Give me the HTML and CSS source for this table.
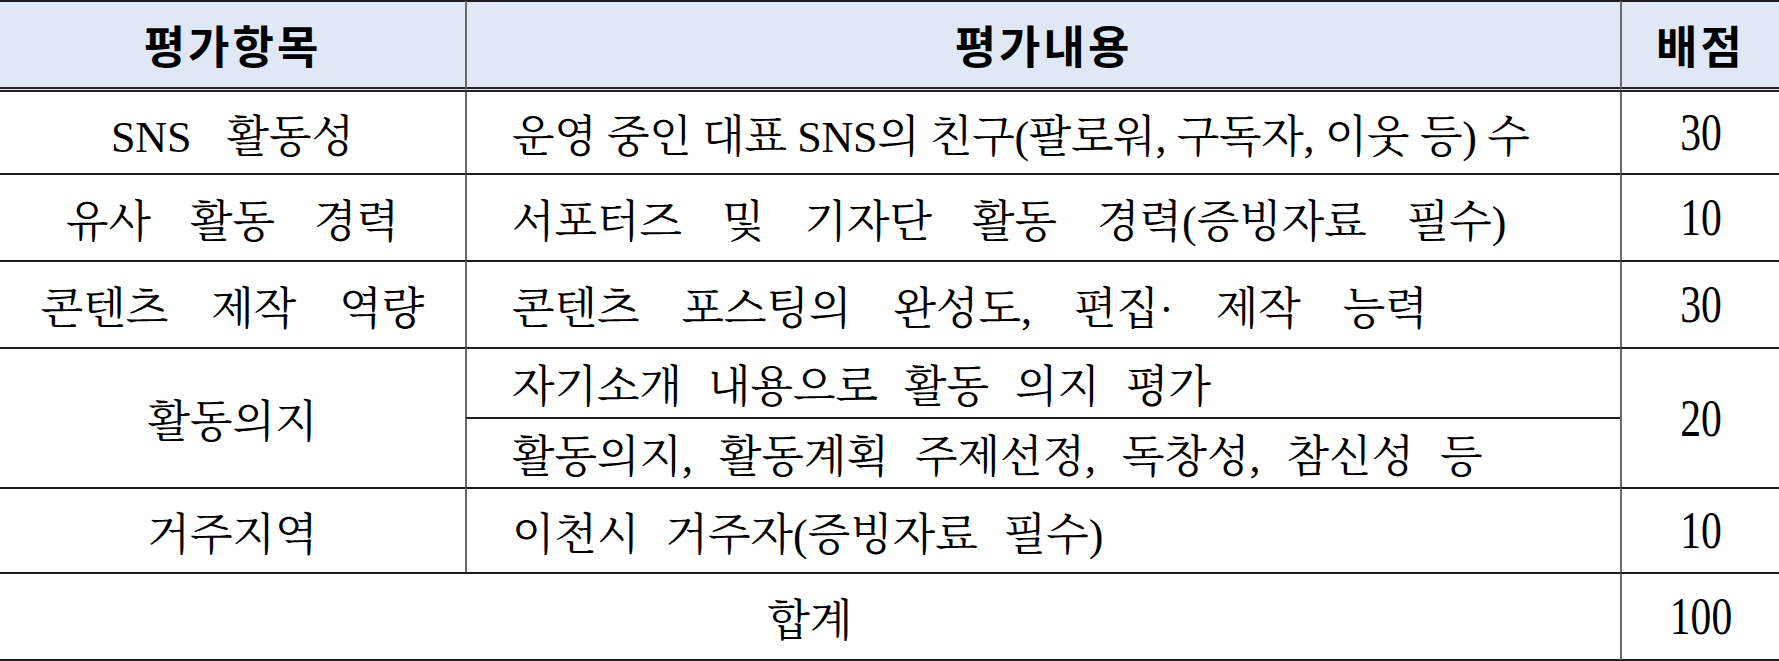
FILE: index.html
```html
<!DOCTYPE html>
<html lang="ko">
<head>
<meta charset="utf-8">
<title>평가항목</title>
<link rel="stylesheet" href="styles.css">
</head>
<body>
<div class="table">
  <div class="cell head">평가항목</div>
  <div class="cell head sep">평가내용</div>
  <div class="cell head sep">배점</div>

  <div class="cell center first"><span class="words">SNS 활동성</span></div>
  <div class="cell text sep first"><span class="tight">운영 중인 대표 SNS의 친구(팔로워, 구독자, 이웃 등) 수</span></div>
  <div class="cell center sep first"><span class="num">30</span></div>

  <div class="cell center"><span class="words2">유사 활동 경력</span></div>
  <div class="cell text sep"><span class="wide2">서포터즈 및 기자단 활동 경력(증빙자료 필수)</span></div>
  <div class="cell center sep"><span class="num">10</span></div>

  <div class="cell center"><span class="words3">콘텐츠 제작 역량</span></div>
  <div class="cell text sep"><span class="wide3">콘텐츠 포스팅의 완성도, 편집· 제작 능력</span></div>
  <div class="cell center sep"><span class="num">30</span></div>

  <div class="cell center span2">활동의지</div>
  <div class="cell text sep"><span class="wide">자기소개 내용으로 활동 의지 평가</span></div>
  <div class="cell center sep span2"><span class="num">20</span></div>
  <div class="cell text sep"><span class="wide">활동의지, 활동계획 주제선정, 독창성, 참신성 등</span></div>

  <div class="cell center">거주지역</div>
  <div class="cell text sep"><span class="wide">이천시 거주자(증빙자료 필수)</span></div>
  <div class="cell center sep"><span class="num">10</span></div>

  <div class="cell center total last">합계</div>
  <div class="cell center sep last"><span class="num">100</span></div>
</div>
</body>
</html>
```
FILE: styles.css
```css
html, body {
  margin: 0;
  padding: 0;
  background: #ffffff;
}

.table {
  display: grid;
  width: 1779px;
  grid-template-columns: 465px 1155px 159px;
  grid-template-rows: 92px 81px 87px 87px 70px 70px 85px 89px;
  font-family: "Liberation Serif", "Noto Serif CJK KR", "Noto Sans CJK KR", serif;
  font-size: 44px;
  color: #000;
}

.cell {
  box-sizing: border-box;
  display: flex;
  align-items: center;
  border-top: 2px solid #1c1c1c;
  white-space: nowrap;
}

.cell.first {
  border-top: none;
}

.cell.sep {
  border-left: 2px solid #6a6a6a;
}

.head {
  justify-content: center;
  background: #dfe8f4;
  border-bottom: 5px double #222;
  font-family: "Noto Sans CJK KR", sans-serif;
  font-weight: 700;
  font-size: 45px;
  letter-spacing: 3px;
}

.center {
  justify-content: center;
}

.text {
  padding-left: 45px;
}

.span2 {
  grid-row: span 2;
}

.total {
  grid-column: span 2;
}

.last {
  border-bottom: 2px solid #1c1c1c;
}

.words {
  word-spacing: 24px;
}

.words2 {
  word-spacing: 28px;
}

.words3 {
  word-spacing: 32px;
}

.wide {
  word-spacing: 15px;
}

.wide2 {
  word-spacing: 29px;
}

.wide3 {
  word-spacing: 31px;
}

.tight {
  letter-spacing: -0.3px;
}

.num {
  display: inline-block;
  font-size: 52px;
  transform: scaleX(0.8);
}
```
